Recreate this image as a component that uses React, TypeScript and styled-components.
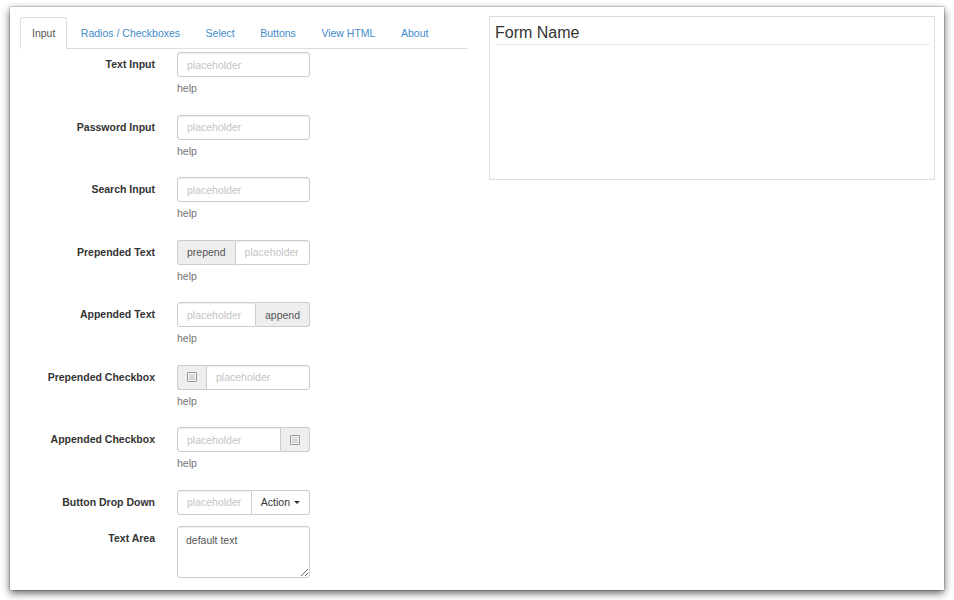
import React from 'react';
import styled, { createGlobalStyle } from 'styled-components';

const GlobalStyle = createGlobalStyle`
  html, body {
    margin: 0;
    padding: 0;
    background: #fff;
  }
  body {
    font-family: "Liberation Sans", Helvetica, Arial, sans-serif;
    color: #333;
  }
`;

const Page = styled.div`
  width: 954px;
  height: 600px;
  padding: 7px 0 0 10px;
  box-sizing: border-box;
  background: #fff;
`;

const Window = styled.div`
  width: 934px;
  height: 583px;
  box-sizing: border-box;
  padding: 9px 9px 0 10px;
  background: #fff;
  display: flex;
  align-items: flex-start;
  gap: 21px;
  box-shadow: 0 0 1px rgba(0, 0, 0, 0.8), 0 3px 8px rgba(0, 0, 0, 0.65);
`;

const LeftColumn = styled.div`
  width: 448px;
  display: flex;
  flex-direction: column;
`;

const Tabs = styled.ul`
  list-style: none;
  margin: 1px 0 0;
  padding: 0;
  display: flex;
  border-bottom: 1px solid #ddd;
`;

const Tab = styled.li<{ $active?: boolean }>`
  height: 30px;
  line-height: 30px;
  padding: 0 11px;
  margin-right: 1.5px;
  margin-bottom: -1px;
  font-size: 10.5px;
  border: 1px solid ${p => (p.$active ? '#ddd' : 'transparent')};
  border-bottom-color: ${p => (p.$active ? '#fff' : 'transparent')};
  border-radius: 3px 3px 0 0;
  background: ${p => (p.$active ? '#fff' : 'transparent')};
  color: ${p => (p.$active ? '#555' : '#428bca')};
  cursor: pointer;
`;

const Form = styled.form`
  margin-top: 3px;
`;

const FormGroup = styled.div`
  display: grid;
  grid-template-columns: 135px 133px;
  column-gap: 22px;
  margin-bottom: 11px;
`;

const Label = styled.label`
  text-align: right;
  font-weight: bold;
  font-size: 10.5px;
  line-height: 15px;
  padding-top: 5px;
  color: #333;
`;

const Field = styled.div`
  display: flex;
  flex-direction: column;
  align-items: flex-start;
`;

const Help = styled.span`
  display: block;
  font-size: 10.5px;
  line-height: 15px;
  color: #737373;
  margin: 4px 0 7.5px;
`;

type Side = 'left' | 'right' | 'both';

const radiusFor = (side: Side) =>
  side === 'left' ? '3px 0 0 3px' : side === 'right' ? '0 3px 3px 0' : '3px';

const TextField = styled.input<{ $round?: Side }>`
  width: 133px;
  height: 25px;
  flex: none;
  box-sizing: border-box;
  border: 1px solid #ccc;
  border-radius: ${p => radiusFor(p.$round ?? 'both')};
  padding: 0 9px;
  font-family: inherit;
  font-size: 10.5px;
  color: #555;
  background: #fff;
  box-shadow: inset 0 1px 1px rgba(0, 0, 0, 0.075);
  outline: none;

  &::placeholder {
    color: #c4c4c4;
  }
`;

const InputGroup = styled.div`
  display: flex;
  width: 133px;
  height: 25px;

  & > input {
    flex: 1 1 0;
    width: auto;
    min-width: 0;
  }
`;

const Addon = styled.span<{ $side: 'left' | 'right' }>`
  display: flex;
  align-items: center;
  justify-content: center;
  box-sizing: border-box;
  height: 25px;
  padding: 0 9px;
  background: #eee;
  border: 1px solid #ccc;
  ${p => (p.$side === 'left' ? 'border-right: 0;' : 'border-left: 0;')}
  border-radius: ${p => radiusFor(p.$side)};
  font-size: 10.5px;
  color: #555;
  white-space: nowrap;
`;

const CheckMark = styled.span`
  display: block;
  width: 8px;
  height: 8px;
  border: 1px solid #999;
  border-radius: 1px;
  background: linear-gradient(#e4e4e4, #cfcfcf);
  box-shadow: inset 0 0 0 1px #f4f4f4;
`;

const DropButton = styled.button`
  display: flex;
  align-items: center;
  gap: 4px;
  height: 25px;
  box-sizing: border-box;
  padding: 0 9px;
  border: 1px solid #ccc;
  border-left: 0;
  border-radius: 0 3px 3px 0;
  background: #fff;
  font-family: inherit;
  font-size: 10.5px;
  color: #333;
  cursor: pointer;
`;

const Caret = styled.span`
  width: 0;
  height: 0;
  border-top: 3px solid #333;
  border-left: 3px solid transparent;
  border-right: 3px solid transparent;
`;

const TextArea = styled.textarea`
  width: 133px;
  height: 52px;
  box-sizing: border-box;
  border: 1px solid #ccc;
  border-radius: 3px;
  padding: 6px 8px;
  font-family: inherit;
  font-size: 10.5px;
  line-height: 1.4;
  color: #555;
  resize: vertical;
  box-shadow: inset 0 1px 1px rgba(0, 0, 0, 0.075);
  outline: none;
`;

const RightColumn = styled.div`
  width: 446px;
`;

const FormBox = styled.fieldset`
  margin: 0;
  height: 164px;
  box-sizing: border-box;
  border: 1px solid #ddd;
  padding: 0 4px 0 5px;
`;

const Legend = styled.div`
  font-size: 16px;
  line-height: 23px;
  padding-top: 4px;
  color: #333;
  border-bottom: 1px solid #e8e8e8;
`;

const tabs = ['Input', 'Radios / Checkboxes', 'Select', 'Buttons', 'View HTML', 'About'];

const Row: React.FC<{ label: string; help?: boolean; children: React.ReactNode }> = ({ label, help = true, children }) => (
  <FormGroup>
    <Label>{label}</Label>
    <Field>
      {children}
      {help && <Help>help</Help>}
    </Field>
  </FormGroup>
);

export default function App() {
  return (
    <Page>
      <GlobalStyle />
      <Window>
        <LeftColumn>
          <Tabs>
            {tabs.map((t, i) => (
              <Tab key={t} $active={i === 0}>
                {t}
              </Tab>
            ))}
          </Tabs>
          <Form onSubmit={e => e.preventDefault()}>
            <Row label="Text Input">
              <TextField placeholder="placeholder" readOnly />
            </Row>
            <Row label="Password Input">
              <TextField type="password" placeholder="placeholder" readOnly />
            </Row>
            <Row label="Search Input">
              <TextField placeholder="placeholder" readOnly />
            </Row>
            <Row label="Prepended Text">
              <InputGroup>
                <Addon $side="left">prepend</Addon>
                <TextField $round="right" placeholder="placeholder" readOnly />
              </InputGroup>
            </Row>
            <Row label="Appended Text">
              <InputGroup>
                <TextField $round="left" placeholder="placeholder" readOnly />
                <Addon $side="right">append</Addon>
              </InputGroup>
            </Row>
            <Row label="Prepended Checkbox">
              <InputGroup>
                <Addon $side="left">
                  <CheckMark />
                </Addon>
                <TextField $round="right" placeholder="placeholder" readOnly />
              </InputGroup>
            </Row>
            <Row label="Appended Checkbox">
              <InputGroup>
                <TextField $round="left" placeholder="placeholder" readOnly />
                <Addon $side="right">
                  <CheckMark />
                </Addon>
              </InputGroup>
            </Row>
            <Row label="Button Drop Down" help={false}>
              <InputGroup>
                <TextField $round="left" placeholder="placeholder" readOnly />
                <DropButton type="button">
                  Action <Caret />
                </DropButton>
              </InputGroup>
            </Row>
            <Row label="Text Area" help={false}>
              <TextArea defaultValue="default text" readOnly />
            </Row>
          </Form>
        </LeftColumn>
        <RightColumn>
          <FormBox>
            <Legend>Form Name</Legend>
          </FormBox>
        </RightColumn>
      </Window>
    </Page>
  );
}
